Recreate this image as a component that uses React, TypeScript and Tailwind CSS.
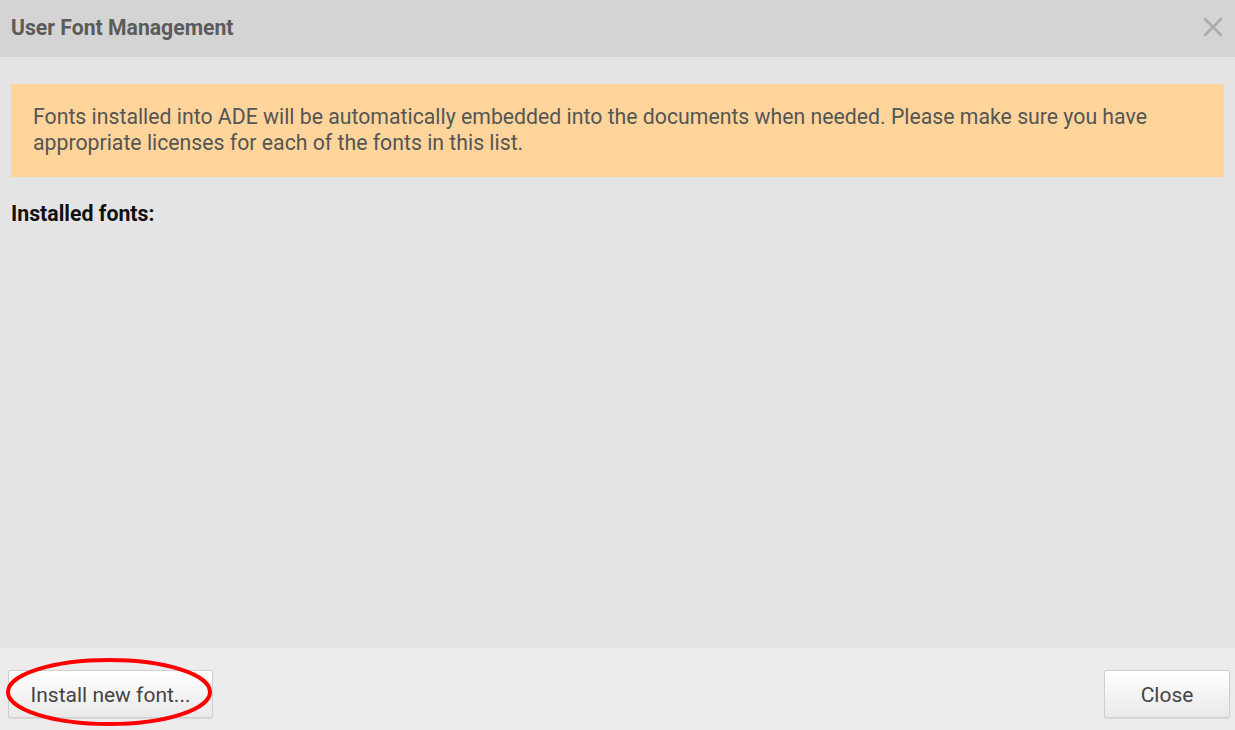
import React from 'react';

const App: React.FC = () => {
  return (
    <div className="relative flex h-[730px] w-[1235px] flex-col overflow-hidden bg-[#e4e4e4] font-['Roboto',sans-serif]">
      {/* Header */}
      <div className="flex h-[57px] shrink-0 items-center justify-between bg-[#d4d4d4] pb-[2px] pl-[11px] pr-[12px]">
        <span className="text-[21.2px] font-bold text-[#5b5b5b]">User Font Management</span>
        <svg width="20" height="20" viewBox="0 0 20 20" className="mt-[-2px]">
          <path d="M2 2 L18 18 M18 2 L2 18" stroke="#ababab" strokeWidth="2.6" strokeLinecap="round" />
        </svg>
      </div>

      {/* Body */}
      <div className="flex flex-1 flex-col px-[11px] pt-[27px]">
        <div className="bg-[#ffd59b] pb-[21px] pl-[22px] pr-[20px] pt-[20px] text-[21.25px] leading-[26px] text-[#555555]">
          Fonts installed into ADE will be automatically embedded into the documents when needed. Please make sure you have appropriate licenses for each of the fonts in this list.
        </div>
        <div className="mt-[21px] text-[21.3px] font-bold text-[#111111]">Installed fonts:</div>
      </div>

      {/* Footer */}
      <div className="flex h-[82px] shrink-0 items-start justify-between bg-[#ececec] pl-[8px] pr-[5px] pt-[22px]">
        <button className="h-[48px] w-[205px] rounded-[2px] border border-[#cfcfcf] bg-gradient-to-b from-[#ffffff] to-[#e9e9e9] pt-[4px] text-[21px] text-[#444444] shadow-[0_1px_1px_rgba(0,0,0,0.08)]">
          Install new font...
        </button>
        <button className="h-[48px] w-[126px] rounded-[2px] border border-[#cfcfcf] bg-gradient-to-b from-[#ffffff] to-[#e9e9e9] pt-[4px] text-[21px] text-[#444444] shadow-[0_1px_1px_rgba(0,0,0,0.08)]">
          Close
        </button>
      </div>

      {/* Annotation */}
      <svg className="pointer-events-none absolute left-0 top-[650px]" width="230" height="80" viewBox="0 0 230 80">
        <ellipse cx="109" cy="42" rx="101" ry="32" fill="none" stroke="#ff0000" strokeWidth="4" />
      </svg>
    </div>
  );
};

export default App;
